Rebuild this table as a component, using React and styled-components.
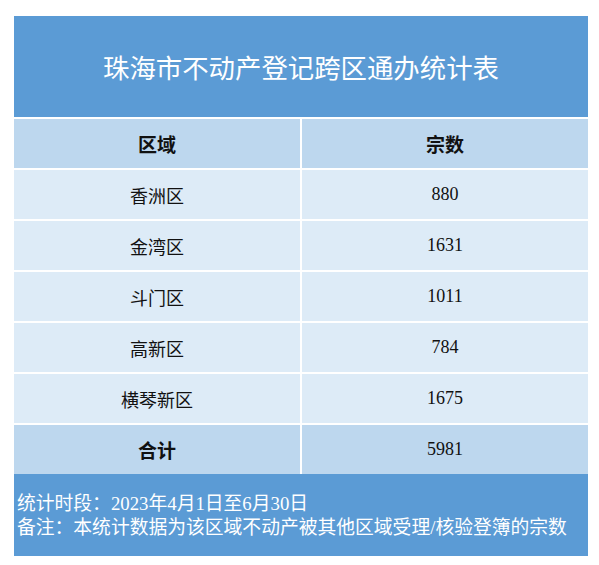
import React from "react";
import styled, { createGlobalStyle } from "styled-components";

const Global = createGlobalStyle`
  html, body { margin: 0; padding: 0; background: #ffffff; }
  body { font-family: "Liberation Serif", "Noto Sans CJK SC", serif; }
`;

const Wrap = styled.div`
  width: 574px;
  margin: 16px 0 0 14px;
  display: flex;
  flex-direction: column;
`;

const Title = styled.div`
  height: 101px;
  background: #5b9bd5;
  color: #ffffff;
  font-size: 26.4px;
  display: flex;
  align-items: center;
  justify-content: center;
  margin-bottom: 2px;
`;

const Grid = styled.div`
  display: grid;
  grid-template-columns: 1fr 1fr;
  column-gap: 2px;
  row-gap: 2px;
`;

const Cell = styled.div`
  height: 49px;
  display: flex;
  align-items: center;
  justify-content: center;
  background: ${(p) => (p.$strong ? "#bdd7ee" : "#ddebf7")};
  color: #111111;
  font-size: ${(p) => (p.$bold ? "19px" : "18px")};
  font-weight: ${(p) => (p.$bold ? 700 : 400)};
`;

const Footer = styled.div`
  background: #5b9bd5;
  color: #ffffff;
  font-size: 18.8px;
  line-height: 24px;
  padding: 18px 4px 16px 3px;
`;

const rows = [
  ["香洲区", "880"],
  ["金湾区", "1631"],
  ["斗门区", "1011"],
  ["高新区", "784"],
  ["横琴新区", "1675"],
];

export default function App() {
  return (
    <>
      <Global />
      <Wrap>
        <Title>珠海市不动产登记跨区通办统计表</Title>
        <Grid>
          <Cell $strong $bold>区域</Cell>
          <Cell $strong $bold>宗数</Cell>
          {rows.map(([a, b]) => (
            <React.Fragment key={a}>
              <Cell>{a}</Cell>
              <Cell>{b}</Cell>
            </React.Fragment>
          ))}
          <Cell $strong $bold>合计</Cell>
          <Cell $strong>5981</Cell>
        </Grid>
        <Footer>
          <div>统计时段：2023年4月1日至6月30日</div>
          <div>备注：本统计数据为该区域不动产被其他区域受理/核验登簿的宗数</div>
        </Footer>
      </Wrap>
    </>
  );
}
